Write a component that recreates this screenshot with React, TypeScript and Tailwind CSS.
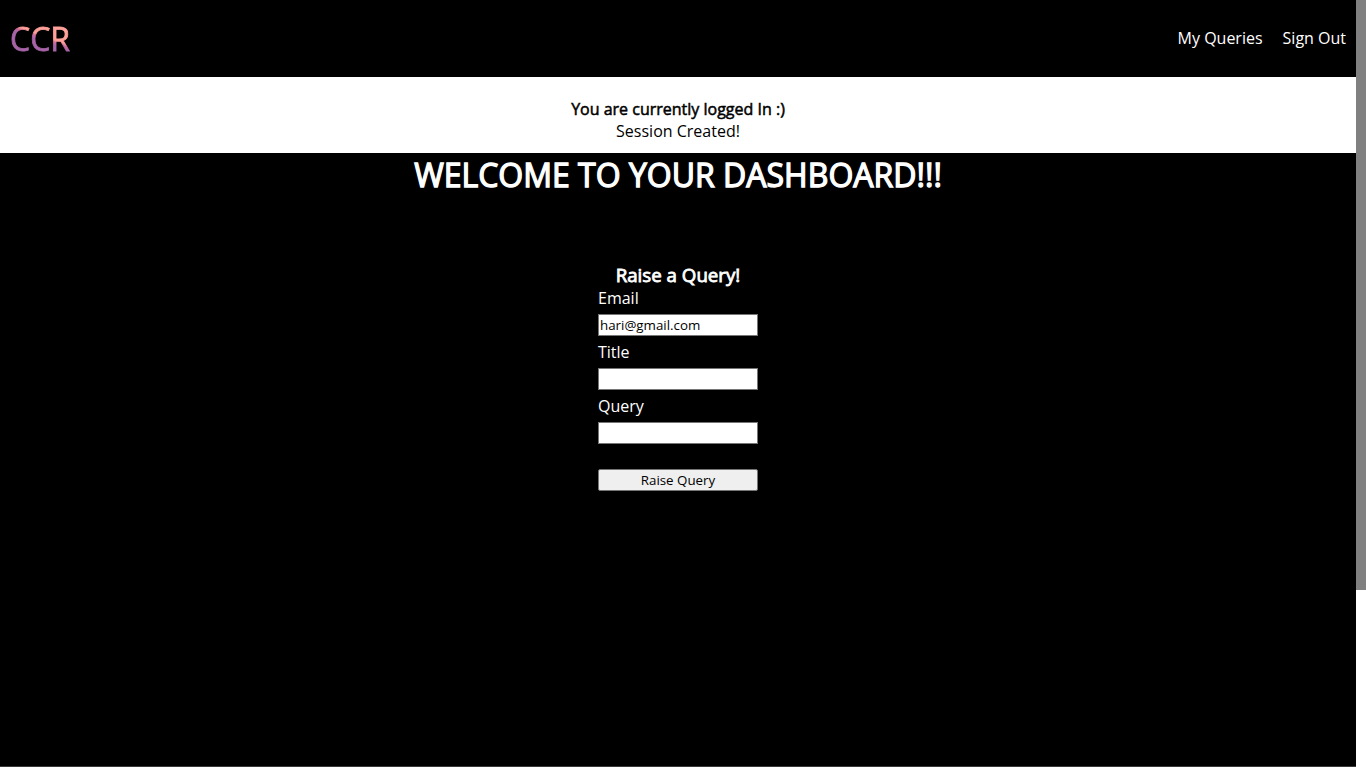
const fields = [
  { label: "Email", type: "email", value: "hari@gmail.com" },
  { label: "Title", type: "text", value: "" },
  { label: "Query", type: "text", value: "" },
];

export default function App() {
  return (
    <div className="flex h-[767px] w-full overflow-hidden bg-black font-['Open_Sans','Noto_Sans',sans-serif] text-base leading-[22px] text-white">
      <div className="flex min-w-0 flex-1 flex-col border-b border-[#3a3a3a]">
        <header className="flex h-[77px] shrink-0 items-center justify-between px-2.5">
          <div className="bg-[linear-gradient(20deg,#a864a8_0%,#a864a8_47%,#cd6a9c_52%,#ff9f98_56%,#ffa69e_100%)] bg-clip-text pt-px text-[32px] leading-[44px] text-transparent [-webkit-text-stroke:0.8px_transparent]">
            CCR
          </div>
          <nav className="flex gap-5 pb-0.5">
            <a href="#queries">My Queries</a>
            <a href="#signout">Sign Out</a>
          </nav>
        </header>
        <section className="h-[76px] shrink-0 bg-white pt-[21px] text-center text-black">
          <h4 className="[-webkit-text-stroke:0.5px_black]">You are currently logged In :)</h4>
          <p>Session Created!</p>
        </section>
        <main className="flex flex-col items-center">
          <h1 className="text-[32px] leading-[44px] [-webkit-text-stroke:1.3px_white]">
            WELCOME TO YOUR DASHBOARD!!!
          </h1>
          <form className="mt-[66px] flex w-40 flex-col">
            <h3 className="pb-px text-center text-[18.72px] leading-[23px] [-webkit-text-stroke:0.8px_white]">
              Raise a Query!
            </h3>
            {fields.map((field) => (
              <div key={field.label} className="mb-[5px] flex flex-col gap-[5px]">
                <label htmlFor={field.label}>{field.label}</label>
                <input
                  id={field.label}
                  type={field.type}
                  defaultValue={field.value}
                  className="h-[22px] w-40 border border-[#767676] bg-white px-px text-[13.333px] leading-[18px] text-black"
                />
              </div>
            ))}
            <button
              type="button"
              className="mt-5 h-[22px] rounded-[2px] border border-[#767676] bg-[#efefef] text-[13.333px] leading-[18px] text-black"
            >
              Raise Query
            </button>
          </form>
        </main>
      </div>
      <div className="w-2.5 shrink-0 bg-white">
        <div className="h-[590px] bg-[#808080]" />
      </div>
    </div>
  );
}
